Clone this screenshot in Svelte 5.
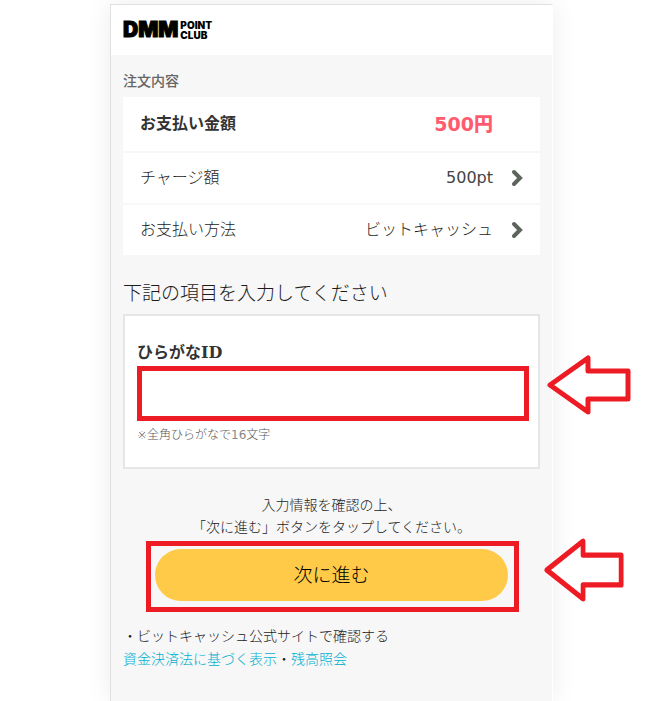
<script lang="ts">
	const charge = [
		{ label: 'チャージ額', value: '500pt', numeric: true },
		{ label: 'お支払い方法', value: 'ビットキャッシュ', numeric: false }
	];

	let hiraganaId = $state('');
</script>

{#snippet pointer()}
	<svg class="pointer" viewBox="0 0 84 60" preserveAspectRatio="none" aria-hidden="true">
		<path d="M3 30 L41 3 V16 H81 V44 H41 V57 Z" />
	</svg>
{/snippet}

<div class="page">
	<div class="sheet">
		<header>
			<a class="logo" href="#top">
				<span class="dmm">DMM</span>
				<span class="club">
					<span>POINT</span>
					<span>CLUB</span>
				</span>
			</a>
		</header>

		<main>
			<h1>注文内容</h1>
			<div class="order">
				<div class="row total">
					<span>お支払い金額</span>
					<strong>500円</strong>
				</div>
				{#each charge as item}
					<a class="row" href="#edit">
						<span>{item.label}</span>
						<span class="value" class:numeric={item.numeric}>{item.value}</span>
						<svg class="chevron" viewBox="0 0 12 18" aria-hidden="true">
							<path d="M3 3 L9 9 L3 15" />
						</svg>
					</a>
				{/each}
			</div>

			<h2>下記の項目を入力してください</h2>
			<div class="form">
				<label for="hiragana-id">ひらがな<span class="id">ID</span></label>
				<div class="marked">
					<input id="hiragana-id" type="text" maxlength="16" bind:value={hiraganaId} />
					{@render pointer()}
				</div>
				<p class="hint">※全角ひらがなで<span class="numeric">16</span>文字</p>
			</div>

			<p class="confirm">入力情報を確認の上、<br />「次に進む」ボタンをタップしてください。</p>
			<div class="marked submit">
				<button type="button">次に進む</button>
				{@render pointer()}
			</div>

			<p class="links">
				・ビットキャッシュ公式サイトで確認する<br />
				<a href="#law">資金決済法に基づく表示</a>・<a href="#balance">残高照会</a>
			</p>
		</main>
	</div>
</div>

<style>
	:global(body) {
		margin: 0;
		background: #fff;
	}

	.page {
		display: grid;
		grid-template-columns: 110px minmax(0, 1fr) 98px;
		box-sizing: border-box;
		min-height: 100vh;
		padding-top: 4px;
		overflow: hidden;
		color: #1c1c1c;
		font-family: 'DejaVu Sans', 'Noto Sans CJK JP', sans-serif;
		font-weight: 300;
	}

	.sheet {
		grid-column: 2;
		border: 1px solid #e0e0e0;
		border-right-color: #fff;
		border-bottom: 0;
		background: #f7f7f7;
		box-shadow: 0 0 24px rgba(0, 0, 0, 0.08);
	}

	header {
		display: flex;
		align-items: center;
		height: 50px;
		padding: 0 12px;
		background: #fff;
	}

	.logo {
		display: flex;
		align-items: center;
		gap: 2px;
		color: #000;
		font-family: Inter, sans-serif;
		font-weight: 900;
		text-decoration: none;
	}
	.dmm {
		font-size: 21px;
		line-height: 20px;
		-webkit-text-stroke: 1px #000;
	}
	.club {
		display: grid;
		font-size: 10px;
		line-height: 10px;
	}

	main {
		padding: 16px 12px 24px;
	}

	h1,
	h2,
	p {
		margin: 0;
	}

	h1 {
		color: #666;
		font-size: 14px;
		font-weight: 500;
		line-height: 20px;
	}

	.order {
		display: grid;
		gap: 2px;
		margin-top: 6px;
	}
	.row {
		display: flex;
		align-items: center;
		justify-content: space-between;
		height: 50px;
		padding: 0 17px;
		background: #fff;
		color: inherit;
		font-size: 16px;
		line-height: 24px;
		text-decoration: none;
	}
	.total {
		height: 54px;
		padding-right: 47px;
		color: #333;
		font-weight: 700;
	}
	.total strong {
		color: #ff5a6e;
		font-size: 19px;
	}
	.value {
		margin-left: auto;
	}
	.numeric {
		color: #444;
		font-weight: 400;
	}
	.chevron {
		width: 12px;
		height: 18px;
		margin-left: 18px;
		fill: none;
		stroke: #5c645c;
		stroke-width: 4;
		stroke-linecap: round;
	}

	h2 {
		margin-top: 24px;
		font-size: 19px;
		font-weight: 300;
		line-height: 28px;
	}

	.form {
		margin-top: 7px;
		padding: 24px 9px 22px 12px;
		border: 2px solid #e6e6e6;
		background: #fff;
	}
	label {
		display: block;
		color: #333;
		font-size: 16px;
		font-weight: 700;
		line-height: 26px;
	}
	.id {
		font-family: 'DejaVu Serif', serif;
	}

	.marked {
		position: relative;
	}
	input {
		display: block;
		box-sizing: border-box;
		width: 100%;
		height: 55px;
		padding: 0 12px;
		border: 5px solid #ed1c24;
		border-radius: 0;
		background: #fff;
		font: inherit;
		font-size: 16px;
	}
	.hint {
		margin-top: 4px;
		color: #555;
		font-size: 12px;
		line-height: 20px;
	}
	.hint .numeric {
		color: #888;
	}

	/* sits outside the sheet, pointing back at the marked control */
	.pointer {
		position: absolute;
		top: -11px;
		left: calc(100% + 18px);
		width: 84px;
		height: 60px;
		fill: #fff;
		stroke: #ed1c24;
		stroke-width: 5;
		stroke-linejoin: round;
	}

	.confirm {
		margin-top: 25px;
		font-size: 14px;
		line-height: 22px;
		text-align: center;
	}

	.submit {
		margin: 3px 21px 0 23px;
		padding: 3px 6px 6px 4px;
		border: 5px solid #ed1c24;
	}
	.submit .pointer {
		top: -8px;
		left: calc(100% + 30px);
		width: 80px;
		height: 64px;
	}
	button {
		display: block;
		width: 100%;
		height: 52px;
		padding: 0 0 4px;
		border: 0;
		border-radius: 26px;
		background: #ffca47;
		color: #000;
		font: inherit;
		font-size: 19px;
		cursor: pointer;
	}

	.links {
		margin-top: 13px;
		font-size: 14px;
		line-height: 23px;
	}
	.links a {
		color: #00b0d0;
		text-decoration: none;
	}
</style>
